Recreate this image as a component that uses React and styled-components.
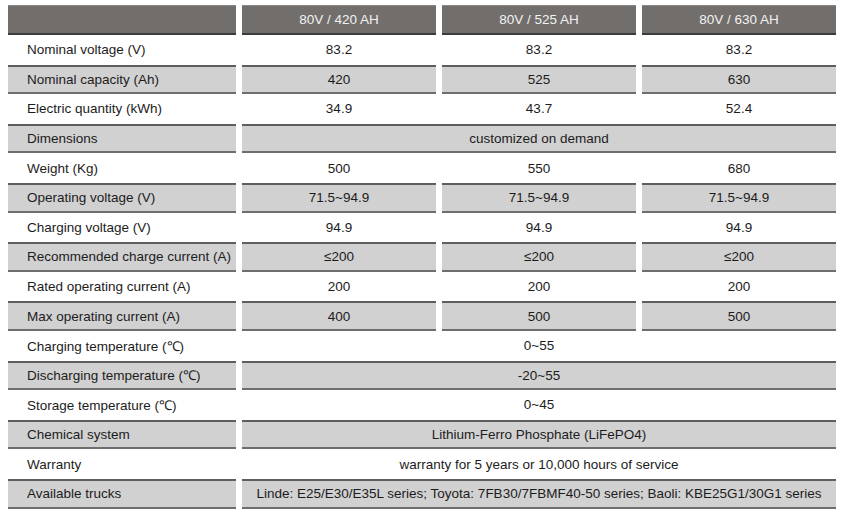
import React from "react";
import styled, { createGlobalStyle, css } from "styled-components";

const Global = createGlobalStyle`
  html, body { margin: 0; padding: 0; background: #ffffff; }
  body { font-family: "Liberation Sans", Arial, sans-serif; }
`;

const Page = styled.div`
  padding: 5px 8px 0 8px;
`;

const Table = styled.div`
  display: flex;
  flex-direction: column;
  width: 828px;
`;

const Row = styled.div`
  display: grid;
  grid-template-columns: 228px 194px 194px 194px;
  column-gap: 6px;
  height: ${(p) => (p.$head ? "30px" : "29.6px")};
`;

const Cell = styled.div`
  box-sizing: border-box;
  display: flex;
  align-items: center;
  justify-content: ${(p) => (p.$label ? "flex-start" : "center")};
  padding-left: ${(p) => (p.$label ? "19px" : "0")};
  grid-column: ${(p) => (p.$span ? `span ${p.$span}` : "auto")};
  font-size: 13.5px;
  color: #1c1c1c;
  white-space: nowrap;
  ${(p) =>
    p.$tone === "head" &&
    css`
      background: #716e6c;
      color: #f2f2f2;
      border-top: 1px solid #8a8886;
      border-bottom: 2px solid #3e3c3b;
    `}
  ${(p) =>
    p.$tone === "shade" &&
    css`
      background: #d1d1d1;
      border-top: 2px solid #5e5e5e;
      border-bottom: 2px solid #6e6e6e;
    `}
`;

const models = ["80V / 420 AH", "80V / 525 AH", "80V / 630 AH"];

const rows = [
  ["Nominal voltage (V)", ["83.2", "83.2", "83.2"]],
  ["Nominal capacity (Ah)", ["420", "525", "630"]],
  ["Electric quantity (kWh)", ["34.9", "43.7", "52.4"]],
  ["Dimensions", "customized on demand"],
  ["Weight (Kg)", ["500", "550", "680"]],
  ["Operating voltage (V)", ["71.5~94.9", "71.5~94.9", "71.5~94.9"]],
  ["Charging voltage (V)", ["94.9", "94.9", "94.9"]],
  ["Recommended charge current (A)", ["≤200", "≤200", "≤200"]],
  ["Rated operating current (A)", ["200", "200", "200"]],
  ["Max operating current (A)", ["400", "500", "500"]],
  ["Charging temperature (℃)", "0~55"],
  ["Discharging temperature (℃)", "-20~55"],
  ["Storage temperature (℃)", "0~45"],
  ["Chemical system", "Lithium-Ferro Phosphate (LiFePO4)"],
  ["Warranty", "warranty for 5 years or 10,000 hours of service"],
  [
    "Available trucks",
    "Linde: E25/E30/E35L series; Toyota: 7FB30/7FBMF40-50 series; Baoli: KBE25G1/30G1 series",
  ],
];

export default function App() {
  return (
    <Page>
      <Global />
      <Table>
        <Row $head>
          <Cell $tone="head" />
          {models.map((m) => (
            <Cell key={m} $tone="head">
              {m}
            </Cell>
          ))}
        </Row>
        {rows.map(([label, vals], i) => {
          const tone = i % 2 === 1 ? "shade" : "plain";
          return (
            <Row key={label}>
              <Cell $label $tone={tone}>
                {label}
              </Cell>
              {Array.isArray(vals) ? (
                vals.map((v, j) => (
                  <Cell key={j} $tone={tone}>
                    {v}
                  </Cell>
                ))
              ) : (
                <Cell $span={3} $tone={tone}>
                  {vals}
                </Cell>
              )}
            </Row>
          );
        })}
      </Table>
    </Page>
  );
}
